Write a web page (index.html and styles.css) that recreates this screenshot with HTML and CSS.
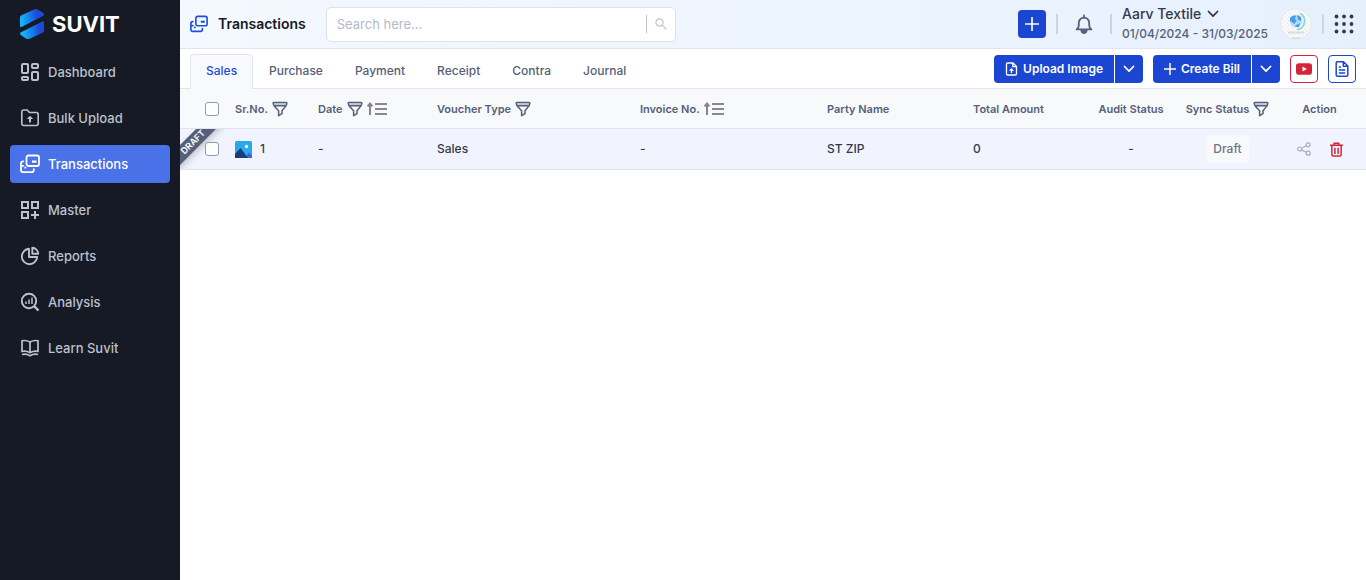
FILE: index.html
```html
<!DOCTYPE html>
<html lang="en">
<head>
<meta charset="utf-8">
<title>Suvit - Transactions</title>
<meta name="viewport" content="width=device-width, initial-scale=1">
<link rel="stylesheet" href="styles.css">
</head>
<body>
<svg class="defs" aria-hidden="true">
  <symbol id="i-trans" viewBox="0 0 20 20"><g fill="none" stroke="currentColor" stroke-width="1.8" stroke-linecap="round" stroke-linejoin="round"><rect x="6.5" y="1.500" width="12.500" height="10.500" rx="2"/><path d="M3.200 7.300A2.200 2.200 0 0 0 1 9.400V16A2.200 2.200 0 0 0 3.200 18.200H11.600A2.200 2.200 0 0 0 13.800 16V15.200M1.500 11.800H3.200"/></g><path fill="currentColor" d="M12 6.500h4.500v2.200h-4.500zM4.400 12.800h1.800v1.800H4.400z"/></symbol>
  <symbol id="i-funnel" viewBox="0 0 16 16"><path d="M1.500 2.600L2.200 5H13.800L14.500 2.600Z" fill="#c3c8d6"/><path d="M1.900 1.500H14.100Q15 1.500 14.800 2.500Q14.600 4.300 13.600 5.400L10 9.800V12.600L6.600 14.600V9.800L2.600 5.400Q1.400 4.200 1.200 2.500Q1 1.500 1.900 1.500ZM2 4.800H14" fill="none" stroke="currentColor" stroke-width="1.500" stroke-linejoin="round"/></symbol>
  <symbol id="i-sort" viewBox="0 0 20 14"><path d="M3 13V2M.6 4.400L3 1.600 5.400 4.400" fill="none" stroke="currentColor" stroke-width="2"/><path d="M8 2H20M8 7H20M8 12H20" stroke="currentColor" stroke-width="2"/></symbol>
  <symbol id="i-down" viewBox="0 0 12 12"><path d="M1.500 3.500L6 8.200 10.500 3.500" fill="none" stroke="currentColor" stroke-width="1.800" stroke-linecap="round" stroke-linejoin="round"/></symbol>
</svg>
<div class="app">
  <aside class="sidebar">
    <a class="brand" href="#">
      <svg class="brand-mark" viewBox="0 0 24 30" aria-hidden="true"><defs><linearGradient id="lg" gradientUnits="userSpaceOnUse" x1="0" y1="16" x2="24" y2="12"><stop offset=".08" stop-color="#12b5fc"/><stop offset=".75" stop-color="#1d4bd8"/></linearGradient></defs><path fill="url(#lg)" d="M0 17V8.500Q0 7 1.400 6.300L14 .4Q16 -.4 17.800 .6L22.500 3.400Q24 4.300 24 5.500Q24 6.400 23 6.900L2 17.700Q0 18.600 0 17Z"/><path fill="url(#lg)" d="M24 13.200V21.500Q24 23 22.600 23.700L9.600 29.700Q7.600 30.400 6 29.400L1.500 26.600Q0 25.700 0 24.600Q0 23.700 1 23.200L22.200 12.400Q24 11.600 24 13.200Z"/></svg>
      <span>SUVIT</span>
    </a>
    <nav class="nav">
      <a class="nav-item" href="#"><svg viewBox="0 0 20 20"><g fill="none" stroke="currentColor" stroke-width="2"><rect x="2" y="2" width="6" height="9" rx="1"/><rect x="12" y="2" width="6" height="4" rx="1"/><rect x="2" y="15" width="6" height="3" rx="1"/><rect x="12" y="10" width="6" height="8" rx="1"/></g></svg>Dashboard</a>
      <a class="nav-item" href="#"><svg viewBox="0 0 20 20"><path d="M1.800 4Q1.800 2 3.800 2H7.200L9.500 4.500H16.200Q18.200 4.500 18.200 6.500V15.500Q18.200 17.500 16.200 17.500H3.800Q1.800 17.500 1.800 15.500Z" fill="none" stroke="currentColor" stroke-width="1.600"/><path d="M10 7.800L13.200 11H11V14.500H9V11H6.800Z" fill="currentColor"/></svg>Bulk Upload</a>
      <a class="nav-item active" href="#" aria-current="page"><svg><use href="#i-trans"/></svg>Transactions</a>
      <a class="nav-item" href="#"><svg viewBox="0 0 20 20"><path d="M2 2H8V8H2ZM12 2H18V8H12ZM2 12H8V18H2ZM15 11V19M11 15H19" fill="none" stroke="currentColor" stroke-width="2"/></svg>Master</a>
      <a class="nav-item" href="#"><svg viewBox="0 0 20 20"><path d="M9 2.800A7.700 7.700 0 1 0 17.200 11H9ZM12.300 1.800V7.700H18.200A6 6 0 0 0 12.300 1.800Z" fill="none" stroke="currentColor" stroke-width="1.900" stroke-linejoin="round"/></svg>Reports</a>
      <a class="nav-item" href="#"><svg viewBox="0 0 20 20"><g fill="none" stroke="currentColor" stroke-width="1.900"><circle cx="9" cy="9" r="7.200"/><path d="M14 14L18.500 18.500" stroke-width="2.400"/><path d="M6 9.500V12M9 7.500V12M12 5.500V12" stroke-width="1.500"/></g></svg>Analysis</a>
      <a class="nav-item" href="#"><svg viewBox="0 0 20 20"><path d="M10 4Q6 1.800 2 2.800V13.500Q6 12.500 10 14.700Q14 12.500 18 13.500V2.800Q14 1.800 10 4ZM10 4V14M2 16.500Q6 15.300 10 17.700Q14 15.300 18 16.500" fill="none" stroke="currentColor" stroke-width="1.700" stroke-linejoin="round"/></svg>Learn Suvit</a>
    </nav>
  </aside>
  <main class="main">
    <header class="topbar">
      <svg class="title-icon" aria-hidden="true"><use href="#i-trans"/></svg>
      <h1 class="title">Transactions</h1>
      <form class="search">
        <input type="search" placeholder="Search here..." aria-label="Search">
        <button type="button" aria-label="Search"><svg viewBox="0 0 12 12"><circle cx="4.500" cy="4.500" r="3.600"/><path d="M7.200 7.200L11.300 11.300"/></svg></button>
      </form>
      <div class="top-right">
        <button class="add" type="button" aria-label="Add"><svg viewBox="0 0 14 14"><path d="M7 0V14M0 7H14" stroke="#fff" stroke-width="1.600"/></svg></button>
        <span class="sep"></span>
        <button class="plain bell" type="button" aria-label="Notifications"><svg viewBox="0 0 20 22"><path d="M10 1V3.500M1.800 16.500H18.200Q15.800 14.500 15.800 12V9.200A5.800 5.800 0 0 0 4.200 9.200V12Q4.200 14.500 1.800 16.500Z" fill="none" stroke="#555f7b" stroke-width="2" stroke-linecap="round" stroke-linejoin="round"/><path d="M6.500 17.500A3.500 3.500 0 0 0 13.500 17.500Z" fill="#555f7b" stroke="#555f7b"/></svg></button>
        <span class="sep"></span>
        <button class="plain company" type="button"><span class="company-name">Aarv Textile <svg><use href="#i-down"/></svg></span><span class="period">01/04/2024 - 31/03/2025</span></button>
        <svg class="avatar" viewBox="0 0 32 32" aria-hidden="true"><defs><pattern id="chk" width="4" height="4" patternUnits="userSpaceOnUse"><rect width="4" height="4" fill="#fbfbfb"/><path d="M0 0h2v2H0zM2 2h2v2H2z" fill="#f1f1f1"/></pattern></defs><circle cx="16" cy="16" r="15.500" fill="url(#chk)" stroke="#e6e9ec"/><circle cx="16" cy="13" r="6.300" fill="#b9dcfa"/><path d="M10 10Q13 6.500 16 8L15 11 17 13 14 16 12 14 10 13ZM17 7L21 9 21 13 18 12ZM16 17L20 15 19 19 15 19Z" fill="#4b9ceb"/><path d="M20 5.500A8.500 8.500 0 0 1 17 21.500" fill="none" stroke="#86dbe0" stroke-width="1.800"/><path d="M8 24.500H24" stroke="#cbdbe2" stroke-width="2" stroke-dasharray="2 .5"/><path d="M12 30H20" stroke="#c9d1d5" stroke-width="1"/></svg>
        <span class="sep"></span>
        <button class="plain apps" type="button" aria-label="Apps"><svg viewBox="0 0 20 20" fill="#343a48"><circle cx="2.500" cy="2.500" r="1.900"/><circle cx="10" cy="2.500" r="1.900"/><circle cx="17.500" cy="2.500" r="1.900"/><circle cx="2.500" cy="10" r="1.900"/><circle cx="10" cy="10" r="1.900"/><circle cx="17.500" cy="10" r="1.900"/><circle cx="2.500" cy="17.500" r="1.900"/><circle cx="10" cy="17.500" r="1.900"/><circle cx="17.500" cy="17.500" r="1.900"/></svg></button>
      </div>
    </header>
    <div class="toolbar">
      <nav class="tabs">
        <a class="tab on" href="#">Sales</a><a class="tab" href="#">Purchase</a><a class="tab" href="#">Payment</a><a class="tab" href="#">Receipt</a><a class="tab" href="#">Contra</a><a class="tab" href="#">Journal</a>
      </nav>
      <div class="actions">
        <div class="split"><button class="btn" type="button"><svg class="doc" viewBox="0 0 12 14"><path d="M1 2.200Q1 1 2.200 1H7.500L11 4.500V11.800Q11 13 9.800 13H2.200Q1 13 1 11.800ZM7.300 1V4.700H11" fill="none" stroke="currentColor" stroke-width="1.300"/><path d="M6 6L8.500 8.700H6.700V11H5.300V8.700H3.500Z" fill="currentColor"/></svg>Upload Image</button><button class="btn more" type="button" aria-label="More upload options"><svg><use href="#i-down"/></svg></button></div>
        <div class="split"><button class="btn" type="button"><svg viewBox="0 0 12 12"><path d="M6 0V12M0 6H12" stroke="currentColor" stroke-width="1.500"/></svg>Create Bill</button><button class="btn more" type="button" aria-label="More bill options"><svg><use href="#i-down"/></svg></button></div>
        <button class="square red" type="button" aria-label="Video help"><svg viewBox="0 0 16 16"><rect y="2.300" width="16" height="11.400" rx="2.800" fill="currentColor"/><path d="M6.500 5.600L10.800 8 6.500 10.400Z" fill="#fff"/></svg></button>
        <button class="square" type="button" aria-label="Documentation"><svg viewBox="0 0 16 16"><path d="M2.200 2Q2.200 .8 3.400 .8H9.500L13.800 5V14Q13.800 15.200 12.600 15.200H3.400Q2.200 15.200 2.200 14ZM9.300 1V5.200H13.600M4.800 6H7M4.800 9H11.200M4.800 12H11.200" fill="none" stroke="currentColor" stroke-width="1.500" stroke-linejoin="round"/></svg></button>
      </div>
    </div>
    <table class="grid">
      <colgroup><col class="c-check"><col class="c-sr"><col class="c-date"><col class="c-type"><col class="c-inv"><col class="c-party"><col class="c-total"><col class="c-audit"><col class="c-sync"><col class="c-action"></colgroup>
      <thead><tr>
        <th class="check"><input type="checkbox" aria-label="Select all"></th>
        <th><span class="head">Sr.No. <svg class="funnel"><use href="#i-funnel"/></svg></span></th>
        <th><span class="head">Date <svg class="funnel"><use href="#i-funnel"/></svg><svg class="sort"><use href="#i-sort"/></svg></span></th>
        <th><span class="head">Voucher Type <svg class="funnel"><use href="#i-funnel"/></svg></span></th>
        <th><span class="head">Invoice No. <svg class="sort"><use href="#i-sort"/></svg></span></th>
        <th>Party Name</th><th>Total Amount</th><th class="mid">Audit Status</th>
        <th class="mid"><span class="head">Sync Status <svg class="funnel"><use href="#i-funnel"/></svg></span></th>
        <th class="mid last">Action</th>
      </tr></thead>
      <tbody><tr>
        <td class="check"><span class="corner"><span class="ribbon">DRAFT</span></span><input type="checkbox" aria-label="Select row 1"></td>
        <td><span class="sr"><svg viewBox="0 0 17 17" aria-hidden="true"><rect width="17" height="17" rx="1.500" fill="#29a9eb"/><circle cx="11.500" cy="5.500" r="1.700" fill="#fff"/><path d="M10 17L14 11.500 17 15V17Z" fill="#3f63c9"/><path d="M0 13L5.500 7 13 17H0Z" fill="#173d7a"/></svg>1</span></td>
        <td>-</td><td>Sales</td><td>-</td><td>ST ZIP</td><td>0</td><td class="mid">-</td>
        <td class="mid"><span class="badge">Draft</span></td>
        <td class="mid last"><span class="row-actions"><button class="plain share" type="button" aria-label="Share"><svg viewBox="0 0 14 14"><g fill="none" stroke="currentColor" stroke-width="1.200"><circle cx="2.700" cy="7" r="2"/><circle cx="11.200" cy="2.800" r="2"/><circle cx="11.200" cy="11.200" r="2"/><path d="M4.500 6.200L9.300 3.700M4.500 7.900L9.300 10.300"/></g></svg></button><button class="plain trash" type="button" aria-label="Delete"><svg viewBox="0 0 14 16"><path d="M0 3.500H14M4.500 3.300V1.200H9.500V3.300M2 4V13.500Q2 15.100 3.500 15.100H10.500Q12 15.100 12 13.500V4M5.300 6V12.800M8.700 6V12.800" fill="none" stroke="currentColor" stroke-width="1.600"/></svg></button></span></td>
      </tr></tbody>
    </table>
  </main>
</div>
</body>
</html>
```
FILE: styles.css
```css
* { box-sizing: border-box; }
body { margin: 0; background: #fff; color: #343a48; font: 500 13px/20px Inter, "Liberation Sans", sans-serif; }
button, input { font: inherit; }
button { margin: 0; padding: 0; cursor: pointer; }
a { text-decoration: none; color: inherit; }
svg { display: block; flex: none; }
.defs { display: none; }
.app { display: flex; min-height: 100vh; }

.sidebar { width: 180px; flex: none; background: #161a24; color: #bcc1cf; }
.brand { display: flex; align-items: center; gap: 8px; height: 48px; padding-left: 20px; color: #fff; font-size: 22px; font-weight: 700; }
.brand-mark { width: 24px; height: 30px; }
.nav { display: flex; flex-direction: column; gap: 8px; padding: 5px 10px; }
.nav-item { display: flex; align-items: center; gap: 8px; height: 38px; padding: 0 10px; border-radius: 4px; }
.nav-item svg { width: 20px; height: 20px; }
.nav-item.active { background: #4971e8; color: #fff; }

.main { flex: 1; min-width: 0; }
.topbar { display: flex; align-items: center; height: 49px; padding: 0 12px 0 10px; border-bottom: 1px solid #e1e4ea; background: linear-gradient(90deg, #f4f8ff, #edf5fe 50%, #e6f0fd); }
.title-icon { width: 18px; height: 18px; color: #1d4ed8; }
.title { margin: 0 20px 0 10px; color: #161a24; font-size: 14px; font-weight: 600; }
.search { display: flex; align-items: center; width: 350px; height: 35px; border: 1px solid #dfe2e8; border-radius: 5px; background: #fff; }
.search input { flex: 1; min-width: 0; padding: 0 10px; border: 0; outline: 0; background: none; font-weight: 400; }
.search input::placeholder { color: #b4b9c7; opacity: 1; }
.search button { display: flex; align-items: center; height: 18px; padding: 0 8px; border: 0; border-left: 1px solid #c4c4c4; background: none; }
.search svg { width: 12px; height: 12px; fill: none; stroke: #c4c4c4; stroke-width: 1.2; }
.top-right { display: flex; align-items: center; margin-left: auto; gap: 10px; }
.plain { border: 0; background: none; color: inherit; }
.add { display: grid; place-items: center; width: 28px; height: 28px; border: 0; border-radius: 4px; background: #1a46d2; }
.add svg { width: 14px; height: 14px; }
.sep { width: 2px; height: 20px; background: #cdd3df; }
.bell { padding: 0 7px; }
.bell svg { width: 18px; height: 21px; }
.company { display: flex; flex-direction: column; min-width: 148px; text-align: left; }
.company-name { display: flex; align-items: center; gap: 6px; font-size: 14px; }
.company-name svg { width: 12px; height: 12px; }
.period { color: #555f7b; font-size: 12px; }
.avatar { width: 32px; height: 32px; }
.apps svg { width: 20px; height: 20px; }

.toolbar { display: flex; justify-content: space-between; height: 40px; padding: 0 10px; border-bottom: 1px solid #e1e4ea; }
.tabs { display: flex; align-items: flex-end; margin-bottom: -1px; }
.tab { height: 35px; padding: 6px 15px; border: 1px solid transparent; border-bottom: 0; border-radius: 4px 4px 0 0; color: #555f7b; font-size: 12px; }
.tab.on { border-color: #e1e4ea; background: #f8f9fc; color: #1d4ed8; }
.actions { display: flex; align-items: center; gap: 10px; }
.split { display: flex; gap: 1px; }
.btn { display: flex; align-items: center; gap: 5px; height: 28px; padding: 0 11px; border: 0; border-radius: 4px 0 0 4px; background: #1a46d2; color: #fff; font-size: 12px; font-weight: 600; }
.btn svg { width: 12px; height: 12px; }
.btn .doc { width: 13px; height: 14px; }
.more { width: 28px; padding: 0 8px; border-radius: 0 4px 4px 0; }
.square { display: grid; place-items: center; width: 28px; height: 28px; border: 1px solid currentColor; border-radius: 4px; background: #fff; color: #1a46d2; }
.square svg { width: 16px; height: 16px; }
.square.red { color: #d4243c; }

.grid { width: 100%; table-layout: fixed; border-collapse: separate; border-spacing: 0; }
.c-check { width: 45px; }
.c-sr { width: 83px; }
.c-date { width: 119px; }
.c-type { width: 203px; }
.c-inv { width: 187px; }
.c-party { width: 146px; }
.c-total { width: 121px; }
.c-audit { width: 94px; }
.c-sync { width: 99px; }
.c-action { width: 89px; }
.grid th, .grid td { padding: 0 0 0 10px; border-bottom: 1px solid #e1e4ea; text-align: left; vertical-align: middle; white-space: nowrap; }
.grid th { height: 40px; background: #f8f9fb; color: #555f7b; font-size: 11px; font-weight: 600; }
.grid td { height: 41px; background: #f1f4fe; font-size: 12px; }
.grid .mid { padding: 0; text-align: center; }
.grid .last { padding-right: 4px; }
.grid .check { position: relative; padding-left: 25px; }
.grid input { display: block; position: relative; appearance: none; width: 14px; height: 14px; margin: 0; border: 1px solid #9299ac; border-radius: 3px; background: #fff; }
.head { display: inline-flex; align-items: center; gap: 4px; vertical-align: middle; }
.funnel { width: 16px; height: 16px; }
.sort { width: 20px; height: 14px; color: #888; }
.corner { position: absolute; inset: 0; overflow: hidden; }
.ribbon { position: absolute; top: 6px; left: -27px; width: 80px; transform: rotate(-45deg); background: #555f7b; box-shadow: 0 3px 6px #0003; color: #fff; font-size: 9px; line-height: 14px; font-weight: 600; text-align: center; }
.sr { display: flex; align-items: center; gap: 8px; }
.sr svg { width: 17px; height: 17px; }
.badge { display: inline-block; padding: 4px 7px; border-radius: 4px; background: #f8f9fb; color: #6d7587; font-size: 12px; }
.row-actions { display: flex; align-items: center; justify-content: center; gap: 19px; }
.share { color: #a9aebb; }
.share svg { width: 14px; height: 14px; }
.trash { color: #d4243c; }
.trash svg { width: 13px; height: 15px; }
```
